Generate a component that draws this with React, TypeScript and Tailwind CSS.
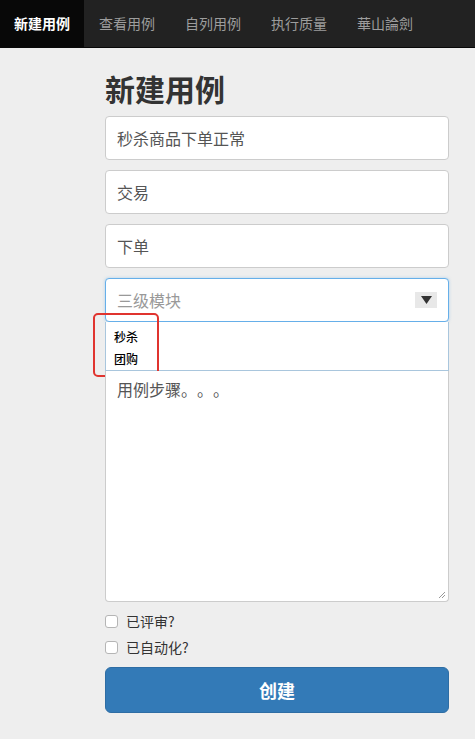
import React from "react";

const font = { fontFamily: '"Noto Sans CJK SC", "Noto Sans", sans-serif' };

export default function App() {
  const nav = ["新建用例", "查看用例", "自列用例", "执行质量", "華山論劍"];
  return (
    <div className="min-h-[739px] bg-[#eeeeee] text-[#333] [text-spacing-trim:space-all]" style={font}>
      <nav className="flex h-[48px] bg-[#222222] border-b border-[#080808]">
        {nav.map((n, i) => (
          <div
            key={n}
            className={
              i === 0
                ? "flex items-center px-[14px] bg-[#080808] text-white text-[14px] font-bold"
                : "flex items-center px-[15px] text-[#9d9d9d] text-[14px]"
            }
          >
            {n}
          </div>
        ))}
      </nav>
      <div className="ml-[105px] w-[344px]">
        <h1 className="text-[30px] font-bold leading-[36px] mt-[22px] mb-[10px] text-[#333]">新建用例</h1>
        <div className="flex flex-col gap-[10px]">
          <div className="h-[44px] bg-white border border-[#cccccc] rounded-[4px] flex items-center px-[11px] text-[16px] text-[#555]">
            秒杀商品下单正常
          </div>
          <div className="h-[44px] bg-white border border-[#cccccc] rounded-[4px] flex items-center px-[11px] text-[16px] text-[#555]">
            交易
          </div>
          <div className="h-[44px] bg-white border border-[#cccccc] rounded-[4px] flex items-center px-[11px] text-[16px] text-[#555]">
            下单
          </div>
          <div>
            <div className="h-[44px] bg-white border border-[#66afe9] rounded-[4px] flex items-center justify-between pl-[11px] pr-[11px] text-[16px] text-[#999] shadow-[0_0_3px_rgba(102,175,233,0.5)]">
              <span>三级模块</span>
              <span className="w-[22px] h-[16px] bg-[#e8e8e8] flex items-center justify-center">
                <svg width="11" height="8" viewBox="0 0 11 8">
                  <polygon points="0,0 11,0 5.5,8" fill="#333" />
                </svg>
              </span>
            </div>
            <div className="relative h-[49px] bg-white border border-t-0 border-[#a9c6dd] pl-[8px] pt-[4px] text-[12px] text-black font-medium leading-[22px]">
              <div>秒杀</div>
              <div>团购</div>
              <div className="absolute left-[-13px] top-[-9px] w-[66px] h-[64px] border-2 border-[#e0342f] rounded-[5px]" />
            </div>
            <div className="relative h-[231px] bg-white border border-t-0 border-[#cccccc] rounded-b-[4px] px-[11px] pt-[6px] text-[16px] text-[#555]">
              用例步骤。。。
              <svg className="absolute right-[2px] bottom-[2px]" width="8" height="8" viewBox="0 0 8 8">
                <line x1="1" y1="7" x2="7" y2="1" stroke="#999" strokeWidth="1" />
                <line x1="4" y1="7" x2="7" y2="4" stroke="#999" strokeWidth="1" />
              </svg>
            </div>
          </div>
        </div>
        <div className="mt-[9px] flex flex-col gap-[5px] text-[14px] text-[#333]">
          <div className="flex items-center h-[21px]">
            <span className="w-[13px] h-[13px] bg-white border border-[#b5b5b5] rounded-[3px] mr-[8px]" />
            已评审?
          </div>
          <div className="flex items-center h-[21px]">
            <span className="w-[13px] h-[13px] bg-white border border-[#b5b5b5] rounded-[3px] mr-[8px]" />
            已自动化?
          </div>
        </div>
        <button className="mt-[9px] w-full h-[46px] bg-[#337ab7] border border-[#2e6da4] rounded-[6px] text-white text-[18px] font-bold">
          创建
        </button>
      </div>
    </div>
  );
}
